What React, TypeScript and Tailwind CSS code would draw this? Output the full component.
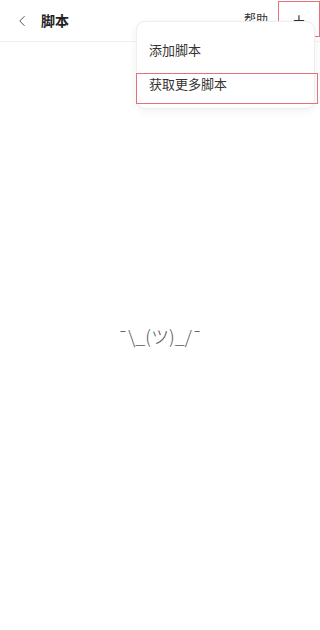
import { ChevronLeft } from 'lucide-react';

export default function App() {
  return (
    <div className="relative flex h-[630px] w-full flex-col bg-white font-['Noto_Sans_CJK_SC',sans-serif] text-[#222]">
      <header className="flex h-[42px] shrink-0 items-center border-b border-[#f0f0f0]">
        <button className="ml-[12px] flex h-[20px] w-[20px] items-center justify-center text-[#444]">
          <ChevronLeft size={18} strokeWidth={1.2} />
        </button>
        <h1 className="ml-[9px] text-[14px] font-bold">脚本</h1>
        <div className="ml-auto flex items-start self-stretch pt-[1px]">
          <span className="mt-[9px] text-[12px] text-[#333]">帮助</span>
          <button className="relative ml-[10px] flex h-[36px] w-[42px] items-center justify-center text-[22px] font-light leading-none text-[#333]">
            +
            <span className="pointer-events-none absolute inset-0 border border-[#e8707a]" />
          </button>
        </div>
      </header>

      <main className="flex flex-1 items-center justify-center">
        <p className="font-['Noto_Sans_CJK_SC',sans-serif] text-[18px] font-light text-[#555]">¯\_(ツ)_/¯</p>
      </main>

      <div className="absolute left-[136px] top-[21px] w-[179px] rounded-[9px] border border-[#eeeeee] bg-white pb-[9px] pt-[12px] shadow-[0_2px_8px_rgba(0,0,0,0.06)]">
        <button className="flex h-[31px] w-full items-center px-[12px] text-[13px] text-[#333]">添加脚本</button>
        <div className="relative mt-[3px]">
          <button className="flex h-[31px] w-full items-center px-[12px] text-[13px] text-[#333]">获取更多脚本</button>
          <span className="pointer-events-none absolute -left-px right-[-4px] top-[5px] h-[31px] border border-[#e8707a]" />
        </div>
      </div>
    </div>
  );
}
